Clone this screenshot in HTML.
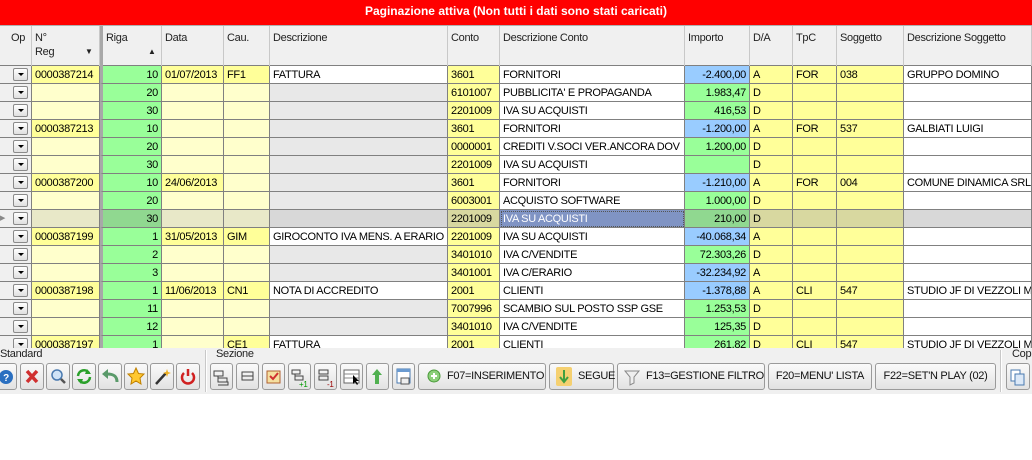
<!DOCTYPE html>
<html><head><meta charset="utf-8"><style>
*{box-sizing:border-box;margin:0;padding:0}
body{width:1032px;height:460px;overflow:hidden;background:#fff;font-family:"Liberation Sans",sans-serif;font-size:11px;color:#000;position:relative;letter-spacing:-0.3px}
#bar{position:absolute;left:0;top:0;width:1032px;height:25px;background:#ff0000;color:#fff;font-weight:bold;font-size:12px;text-align:center;line-height:22px;letter-spacing:0}
#hd{position:absolute;top:25px;left:0;height:41px;width:1032px;background:#f0f0f0;border-top:1px solid #b0b0b0;border-bottom:1px solid #808080;display:flex}
#hd div{height:40px;border-right:1px solid #c8c8c8;padding:5px 0 0 3px;line-height:14px;position:relative;color:#222}
.r{display:flex;height:18px;position:absolute;left:0;width:1032px}
.r div{height:18px;border-right:1px solid #808080;border-bottom:1px solid #808080;line-height:18px;padding:0 3px;white-space:nowrap;overflow:hidden}
.c0{width:8px}.c1{width:24px}.c2{width:68px}.c3{width:62px}.c4{width:62px}.c5{width:46px}.c6{width:178px}.c7{width:52px}.c8{width:185px}.c9{width:65px}.c10{width:43px}.c11{width:44px}.c12{width:67px}.c13{width:128px}
.r .c0{background:#f0f0f0;border-right:none}
.r .c1{background:#f0f0f0;position:relative}
.r .c3,#hd .c3{border-left:3px solid #a8a8a8}
.r .c3,.r .c9{text-align:right}
.y{background:#ffff99}.ly{background:#ffffcc}.g{background:#99ff99}.w{background:#fff}.gr{background:#e8e8e8}.b{background:#99ccff}
.dd{position:absolute;left:5px;top:2px;width:15px;height:13px;border:1px solid #8a8a8a;border-radius:2px;background:linear-gradient(#fff,#e0e0e0)}
.dd:after{content:"";position:absolute;left:4px;top:4px;border-left:3px solid transparent;border-right:3px solid transparent;border-top:3px solid #000}
.s .c2,.s .c4,.s .c5{background:#e8e8c8}.s .c3,.s .c9{background:#90d890}.s .c6,.s .c13{background:#d8d8d8}
.s .c7,.s .c10,.s .c11,.s .c12{background:#d8d8a0}.s .c8{background:#8094c4;color:#fff;outline:1px dotted #555;outline-offset:-2px}
#tb{position:absolute;top:348px;left:0;width:1032px;height:46px;background:#f0f0f0}
.lb{position:absolute;top:0;font-size:11px;color:#222}
.bt{position:absolute;top:15px;height:27px;border:1px solid #9a9a9a;border-radius:3px;background:linear-gradient(#fafafa,#e2e2e2);font-size:11px;line-height:25px;color:#111;white-space:nowrap}
.sep{position:absolute;top:2px;width:2px;height:42px;border-left:1px solid #c8c8c8;border-right:1px solid #fff}
</style></head><body>
<div id="bar">Paginazione attiva (Non tutti i dati sono stati caricati)</div>
<div id="hd">
<div class="c0" style="border-right:none"></div><div class="c1">Op</div><div class="c2">N°<br>Reg<span style="position:absolute;left:53px;top:19px;font-size:8px">▼</span></div><div class="c3">Riga<span style="position:absolute;left:45px;top:19px;font-size:8px">▲</span></div><div class="c4">Data</div><div class="c5">Cau.</div><div class="c6">Descrizione</div><div class="c7">Conto</div><div class="c8">Descrizione Conto</div><div class="c9">Importo</div><div class="c10">D/A</div><div class="c11">TpC</div><div class="c12">Soggetto</div><div class="c13">Descrizione Soggetto</div>
</div>

<div class="r" style="top:66px"><div class="c0"></div><div class="c1"><span class="dd"></span></div><div class="c2 y">0000387214</div><div class="c3 g">10</div><div class="c4 y">01/07/2013</div><div class="c5 y">FF1</div><div class="c6 w">FATTURA</div><div class="c7 y">3601</div><div class="c8 w">FORNITORI</div><div class="c9 b">-2.400,00</div><div class="c10 y">A</div><div class="c11 y">FOR</div><div class="c12 y">038</div><div class="c13 w">GRUPPO DOMINO</div></div>
<div class="r" style="top:84px"><div class="c0"></div><div class="c1"><span class="dd"></span></div><div class="c2 ly"></div><div class="c3 g">20</div><div class="c4 ly"></div><div class="c5 ly"></div><div class="c6 gr"></div><div class="c7 y">6101007</div><div class="c8 w">PUBBLICITA' E PROPAGANDA</div><div class="c9 g">1.983,47</div><div class="c10 y">D</div><div class="c11 y"></div><div class="c12 y"></div><div class="c13 w"></div></div>
<div class="r" style="top:102px"><div class="c0"></div><div class="c1"><span class="dd"></span></div><div class="c2 ly"></div><div class="c3 g">30</div><div class="c4 ly"></div><div class="c5 ly"></div><div class="c6 gr"></div><div class="c7 y">2201009</div><div class="c8 w">IVA SU ACQUISTI</div><div class="c9 g">416,53</div><div class="c10 y">D</div><div class="c11 y"></div><div class="c12 y"></div><div class="c13 w"></div></div>
<div class="r" style="top:120px"><div class="c0"></div><div class="c1"><span class="dd"></span></div><div class="c2 y">0000387213</div><div class="c3 g">10</div><div class="c4 ly"></div><div class="c5 ly"></div><div class="c6 gr"></div><div class="c7 y">3601</div><div class="c8 w">FORNITORI</div><div class="c9 b">-1.200,00</div><div class="c10 y">A</div><div class="c11 y">FOR</div><div class="c12 y">537</div><div class="c13 w">GALBIATI LUIGI</div></div>
<div class="r" style="top:138px"><div class="c0"></div><div class="c1"><span class="dd"></span></div><div class="c2 ly"></div><div class="c3 g">20</div><div class="c4 ly"></div><div class="c5 ly"></div><div class="c6 gr"></div><div class="c7 y">0000001</div><div class="c8 w">CREDITI V.SOCI VER.ANCORA DOV</div><div class="c9 g">1.200,00</div><div class="c10 y">D</div><div class="c11 y"></div><div class="c12 y"></div><div class="c13 w"></div></div>
<div class="r" style="top:156px"><div class="c0"></div><div class="c1"><span class="dd"></span></div><div class="c2 ly"></div><div class="c3 g">30</div><div class="c4 ly"></div><div class="c5 ly"></div><div class="c6 gr"></div><div class="c7 y">2201009</div><div class="c8 w">IVA SU ACQUISTI</div><div class="c9 g"></div><div class="c10 y">D</div><div class="c11 y"></div><div class="c12 y"></div><div class="c13 w"></div></div>
<div class="r" style="top:174px"><div class="c0"></div><div class="c1"><span class="dd"></span></div><div class="c2 y">0000387200</div><div class="c3 g">10</div><div class="c4 y">24/06/2013</div><div class="c5 ly"></div><div class="c6 gr"></div><div class="c7 y">3601</div><div class="c8 w">FORNITORI</div><div class="c9 b">-1.210,00</div><div class="c10 y">A</div><div class="c11 y">FOR</div><div class="c12 y">004</div><div class="c13 w">COMUNE DINAMICA SRL</div></div>
<div class="r" style="top:192px"><div class="c0"></div><div class="c1"><span class="dd"></span></div><div class="c2 ly"></div><div class="c3 g">20</div><div class="c4 ly"></div><div class="c5 ly"></div><div class="c6 gr"></div><div class="c7 y">6003001</div><div class="c8 w">ACQUISTO SOFTWARE</div><div class="c9 g">1.000,00</div><div class="c10 y">D</div><div class="c11 y"></div><div class="c12 y"></div><div class="c13 w"></div></div>
<div class="r s" style="top:210px"><div class="c0" style="font-size:7px;color:#888;padding:0">▶</div><div class="c1"><span class="dd"></span></div><div class="c2"></div><div class="c3">30</div><div class="c4"></div><div class="c5"></div><div class="c6"></div><div class="c7">2201009</div><div class="c8">IVA SU ACQUISTI</div><div class="c9">210,00</div><div class="c10">D</div><div class="c11"></div><div class="c12"></div><div class="c13"></div></div>
<div class="r" style="top:228px"><div class="c0"></div><div class="c1"><span class="dd"></span></div><div class="c2 y">0000387199</div><div class="c3 g">1</div><div class="c4 y">31/05/2013</div><div class="c5 y">GIM</div><div class="c6 w">GIROCONTO IVA MENS. A ERARIO</div><div class="c7 y">2201009</div><div class="c8 w">IVA SU ACQUISTI</div><div class="c9 b">-40.068,34</div><div class="c10 y">A</div><div class="c11 y"></div><div class="c12 y"></div><div class="c13 w"></div></div>
<div class="r" style="top:246px"><div class="c0"></div><div class="c1"><span class="dd"></span></div><div class="c2 ly"></div><div class="c3 g">2</div><div class="c4 ly"></div><div class="c5 ly"></div><div class="c6 gr"></div><div class="c7 y">3401010</div><div class="c8 w">IVA C/VENDITE</div><div class="c9 g">72.303,26</div><div class="c10 y">D</div><div class="c11 y"></div><div class="c12 y"></div><div class="c13 w"></div></div>
<div class="r" style="top:264px"><div class="c0"></div><div class="c1"><span class="dd"></span></div><div class="c2 ly"></div><div class="c3 g">3</div><div class="c4 ly"></div><div class="c5 ly"></div><div class="c6 gr"></div><div class="c7 y">3401001</div><div class="c8 w">IVA C/ERARIO</div><div class="c9 b">-32.234,92</div><div class="c10 y">A</div><div class="c11 y"></div><div class="c12 y"></div><div class="c13 w"></div></div>
<div class="r" style="top:282px"><div class="c0"></div><div class="c1"><span class="dd"></span></div><div class="c2 y">0000387198</div><div class="c3 g">1</div><div class="c4 y">11/06/2013</div><div class="c5 y">CN1</div><div class="c6 w">NOTA DI ACCREDITO</div><div class="c7 y">2001</div><div class="c8 w">CLIENTI</div><div class="c9 b">-1.378,88</div><div class="c10 y">A</div><div class="c11 y">CLI</div><div class="c12 y">547</div><div class="c13 w">STUDIO JF DI VEZZOLI MA</div></div>
<div class="r" style="top:300px"><div class="c0"></div><div class="c1"><span class="dd"></span></div><div class="c2 ly"></div><div class="c3 g">11</div><div class="c4 ly"></div><div class="c5 ly"></div><div class="c6 gr"></div><div class="c7 y">7007996</div><div class="c8 w">SCAMBIO SUL POSTO SSP GSE</div><div class="c9 g">1.253,53</div><div class="c10 y">D</div><div class="c11 y"></div><div class="c12 y"></div><div class="c13 w"></div></div>
<div class="r" style="top:318px"><div class="c0"></div><div class="c1"><span class="dd"></span></div><div class="c2 ly"></div><div class="c3 g">12</div><div class="c4 ly"></div><div class="c5 ly"></div><div class="c6 gr"></div><div class="c7 y">3401010</div><div class="c8 w">IVA C/VENDITE</div><div class="c9 g">125,35</div><div class="c10 y">D</div><div class="c11 y"></div><div class="c12 y"></div><div class="c13 w"></div></div>
<div class="r" style="top:336px"><div class="c0"></div><div class="c1"><span class="dd"></span></div><div class="c2 y">0000387197</div><div class="c3 g">1</div><div class="c4 ly"></div><div class="c5 y">CE1</div><div class="c6 w">FATTURA</div><div class="c7 y">2001</div><div class="c8 w">CLIENTI</div><div class="c9 g">261,82</div><div class="c10 y">D</div><div class="c11 y">CLI</div><div class="c12 y">547</div><div class="c13 w">STUDIO JF DI VEZZOLI MA</div></div>

<div id="tb">
<div class="lb" style="left:0">Standard</div>
<div class="lb" style="left:216px">Sezione</div>
<div class="lb" style="left:1012px">Copi</div>
<div class="bt" style="left:-6px;width:23px"><svg width="21" height="25"><circle cx="11" cy="13" r="7" fill="#2a6fc0"/><text x="11" y="17" font-size="10" font-weight="bold" fill="#fff" text-anchor="middle">?</text></svg></div>
<div class="bt" style="left:20px;width:24px"><svg width="22" height="25"><path d="M6 7L16 18M16 7L6 18" stroke="#d03030" stroke-width="3.5"/></svg></div>
<div class="bt" style="left:46px;width:24px"><svg width="22" height="25"><circle cx="10" cy="11" r="5" fill="#cfe3f7" stroke="#4a7ab0" stroke-width="1.5"/><path d="M14 15L18 19" stroke="#555" stroke-width="2.5"/></svg></div>
<div class="bt" style="left:72px;width:24px"><svg width="22" height="25"><path d="M5 12A6 6 0 0 1 16 9M17 13A6 6 0 0 1 6 16" stroke="#2aa02a" stroke-width="2.5" fill="none"/><path d="M14 5L18 10L12 10Z M8 20L4 15L10 15Z" fill="#2aa02a"/></svg></div>
<div class="bt" style="left:98px;width:24px"><svg width="22" height="25"><path d="M18 18C18 11 13 10 8 10" stroke="#5a9a6a" stroke-width="3" fill="none"/><path d="M9 5L3 10L9 15Z" fill="#5a9a6a"/></svg></div>
<div class="bt" style="left:124px;width:24px"><svg width="22" height="25"><path d="M11 4L13.5 9.5L19 10L15 14L16 20L11 17L6 20L7 14L3 10L8.5 9.5Z" fill="#ffc830" stroke="#c08000"/></svg></div>
<div class="bt" style="left:150px;width:24px"><svg width="22" height="25"><path d="M5 20L15 9" stroke="#333" stroke-width="2.5"/><path d="M16 5l1 3 3 1-3 1-1 3-1-3-3-1 3-1z" fill="#f0b020"/></svg></div>
<div class="bt" style="left:176px;width:24px"><svg width="22" height="25"><path d="M7 9A6 6 0 1 0 15 9M11 5V12" stroke="#d02020" stroke-width="2.5" fill="none"/></svg></div>
<div class="sep" style="left:205px"></div>
<div class="bt" style="left:210px;width:23px"><svg width="21" height="25"><path d="M3 7h9v5H3zM7 12v6h10v3H7" stroke="#444" fill="none"/><path d="M7 14h9v4H7z" stroke="#444" fill="none"/></svg></div>
<div class="bt" style="left:236px;width:23px"><svg width="21" height="25"><rect x="5" y="8" width="11" height="4" stroke="#444" fill="none"/><rect x="5" y="12" width="11" height="4" stroke="#444" fill="none"/></svg></div>
<div class="bt" style="left:262px;width:23px"><svg width="21" height="25"><rect x="4" y="7" width="13" height="12" fill="#f5e0a0" stroke="#b06030"/><path d="M7 12l3 3 5-6" stroke="#d03030" stroke-width="2" fill="none"/></svg></div>
<div class="bt" style="left:288px;width:23px"><svg width="21" height="25"><path d="M3 6h8v4H3zM6 10v6h8v-4H6" stroke="#444" fill="none"/><text x="10" y="23" font-size="8" fill="#090">+1</text></svg></div>
<div class="bt" style="left:314px;width:23px"><svg width="21" height="25"><rect x="4" y="6" width="9" height="4" stroke="#444" fill="none"/><rect x="4" y="12" width="9" height="4" stroke="#444" fill="none"/><text x="12" y="23" font-size="8" fill="#900">-1</text></svg></div>
<div class="bt" style="left:340px;width:23px"><svg width="21" height="25"><rect x="3" y="6" width="15" height="13" fill="#fff" stroke="#666"/><path d="M3 10h15M3 14h15" stroke="#888"/><path d="M12 11l0 9 2-2 2 3 1-1-2-3h3z" fill="#000"/></svg></div>
<div class="bt" style="left:366px;width:23px"><svg width="21" height="25"><path d="M10 5L5 11H8V20H12V11H15Z" fill="#50b050"/></svg></div>
<div class="bt" style="left:392px;width:23px"><svg width="21" height="25"><rect x="4" y="5" width="13" height="14" fill="#fff" stroke="#4a7ab0"/><rect x="4" y="5" width="13" height="3" fill="#6a9ad0"/><rect x="8" y="14" width="8" height="6" fill="#eee" stroke="#555"/></svg></div>
<div class="bt" style="left:418px;width:128px"><svg width="20" height="25" style="position:absolute;left:4px;top:0"><circle cx="11" cy="12" r="6" fill="#8ccf7a" stroke="#4a9a3a"/><path d="M8 12h6M11 9v6" stroke="#fff" stroke-width="2"/></svg><span style="position:absolute;left:28px">F07=INSERIMENTO</span></div>
<div class="bt" style="left:549px;width:65px"><svg width="20" height="25" style="position:absolute;left:4px;top:0"><rect x="2" y="3" width="16" height="19" rx="2" fill="#f5d070"/><path d="M10 6V17M6 13l4 5 4-5" stroke="#40a040" stroke-width="2" fill="none"/></svg><span style="position:absolute;left:28px">SEGUE</span></div>
<div class="bt" style="left:617px;width:148px"><svg width="20" height="25" style="position:absolute;left:4px;top:0"><path d="M3 7h14l-5 6v6l-4 2v-8z" fill="#eee" stroke="#888"/></svg><span style="position:absolute;left:28px">F13=GESTIONE FILTRO</span></div>
<div class="bt" style="left:768px;width:104px;text-align:center">F20=MENU' LISTA</div>
<div class="bt" style="left:875px;width:121px;text-align:center">F22=SET'N PLAY (02)</div>
<div class="sep" style="left:1000px"></div>
<div class="bt" style="left:1006px;width:24px"><svg width="22" height="25"><rect x="4" y="6" width="9" height="11" fill="#fff" stroke="#4a7ab0"/><rect x="8" y="10" width="9" height="11" fill="#dbe8f7" stroke="#4a7ab0"/></svg></div>
</div>
</body></html>
